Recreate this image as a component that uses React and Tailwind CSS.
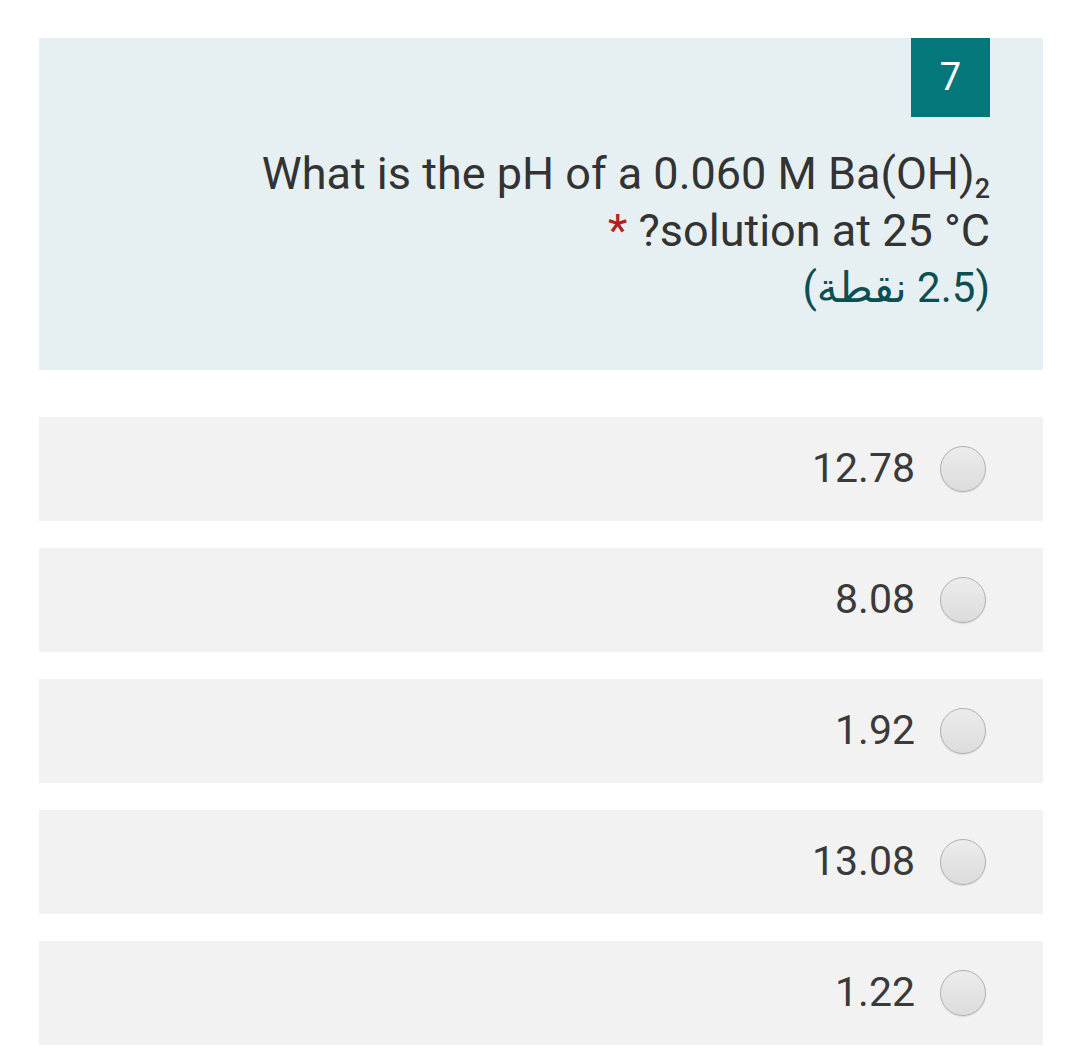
export default function App() {
  const options = ["12.78", "8.08", "1.92", "13.08", "1.22"];
  return (
    <div className="w-[1080px] h-[1060px] bg-white overflow-hidden pt-[38px] pl-[39px] pr-[37px]" style={{ fontFamily: "Roboto, 'DejaVu Sans', sans-serif" }}>
      <div className="bg-[#e6f0f3] h-[332px] pr-[53px] flex flex-col items-end">
        <div className="w-[79px] h-[79px] bg-[#037779] text-white flex items-center justify-center text-[38px]">7</div>
        <div className="mt-[28px] text-right text-[#333333] text-[45px] leading-[57px]">
          <div className="h-[57px] whitespace-nowrap">What is the pH of a 0.060 M Ba(OH)<span className="text-[27px] font-medium relative top-[9px] leading-none">2</span></div>
          <div className="h-[57px] whitespace-nowrap"><span className="text-[#b3201d]">*</span> ?solution at 25 °C</div>
          <div dir="rtl" className="h-[57px] whitespace-nowrap text-[#0b4f52] text-[42px]">(2.5 نقطة)</div>
        </div>
      </div>
      <div className="mt-[47px] flex flex-col gap-[27px]">
        {options.map((o) => (
          <div key={o} className="h-[104px] bg-[#f2f2f2] flex items-center justify-end pr-[57px] gap-[25px]">
            <span className="text-[41px] text-[#3a3a3a]">{o}</span>
            <span className="w-[46px] h-[46px] rounded-full border border-[#b0b0b0] bg-gradient-to-b from-[#ececec] to-[#dcdcdc] shadow-[0_1px_1px_rgba(0,0,0,0.1)]"></span>
          </div>
        ))}
      </div>
    </div>
  );
}
